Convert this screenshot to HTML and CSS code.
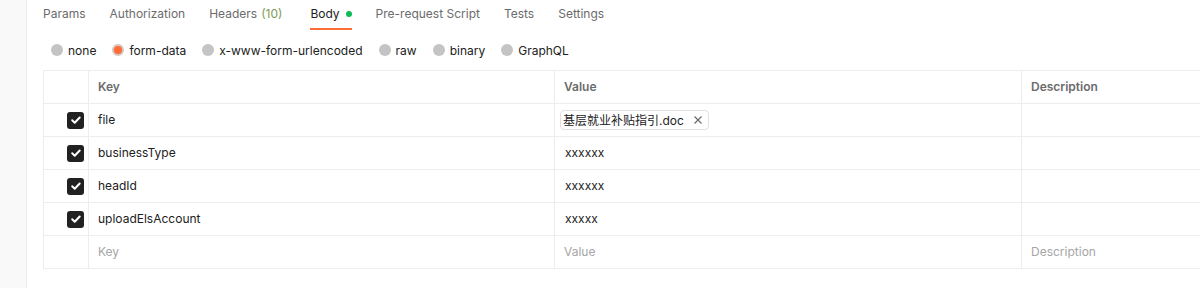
FILE: index.html
```html
<!DOCTYPE html>
<html>
<head>
<meta charset="utf-8">
<link rel="stylesheet" href="styles.css">
</head>
<body>
<div class="side"></div>
<div class="main">
  <div class="tabs">
    <div class="tab">Params</div>
    <div class="tab">Authorization</div>
    <div class="tab">Headers <span class="count">(10)</span></div>
    <div class="tab active">Body <span class="dot"></span></div>
    <div class="tab">Pre-request Script</div>
    <div class="tab">Tests</div>
    <div class="tab">Settings</div>
  </div>
  <div class="radios">
    <label class="radio"><span class="circle"></span>none</label>
    <label class="radio"><span class="circle on"></span>form-data</label>
    <label class="radio"><span class="circle"></span>x-www-form-urlencoded</label>
    <label class="radio"><span class="circle"></span>raw</label>
    <label class="radio"><span class="circle"></span>binary</label>
    <label class="radio"><span class="circle"></span>GraphQL</label>
  </div>
  <div class="table">
    <div class="row head">
      <div class="cell chk"></div>
      <div class="cell">Key</div>
      <div class="cell">Value</div>
      <div class="cell">Description</div>
    </div>
    <div class="row">
      <div class="cell chk"><span class="box"><svg viewBox="0 0 16 16" width="16" height="16"><path d="M4.2 8.3l2.5 2.4 5-5.2" fill="none" stroke="#fff" stroke-width="2" stroke-linecap="round" stroke-linejoin="round"/></svg></span></div>
      <div class="cell">file</div>
      <div class="cell"><span class="chip">基层就业补贴指引.doc<span class="x"><svg viewBox="0 0 10 10" width="10" height="10"><path d="M1.5 1.5l7 7M8.5 1.5l-7 7" stroke="#6b6b6b" stroke-width="1.2"/></svg></span></span></div>
      <div class="cell"></div>
    </div>
    <div class="row">
      <div class="cell chk"><span class="box"><svg viewBox="0 0 16 16" width="16" height="16"><path d="M4.2 8.3l2.5 2.4 5-5.2" fill="none" stroke="#fff" stroke-width="2" stroke-linecap="round" stroke-linejoin="round"/></svg></span></div>
      <div class="cell">businessType</div>
      <div class="cell val">xxxxxx</div>
      <div class="cell"></div>
    </div>
    <div class="row">
      <div class="cell chk"><span class="box"><svg viewBox="0 0 16 16" width="16" height="16"><path d="M4.2 8.3l2.5 2.4 5-5.2" fill="none" stroke="#fff" stroke-width="2" stroke-linecap="round" stroke-linejoin="round"/></svg></span></div>
      <div class="cell">headId</div>
      <div class="cell val">xxxxxx</div>
      <div class="cell"></div>
    </div>
    <div class="row">
      <div class="cell chk"><span class="box"><svg viewBox="0 0 16 16" width="16" height="16"><path d="M4.2 8.3l2.5 2.4 5-5.2" fill="none" stroke="#fff" stroke-width="2" stroke-linecap="round" stroke-linejoin="round"/></svg></span></div>
      <div class="cell">uploadElsAccount</div>
      <div class="cell val">xxxxx</div>
      <div class="cell"></div>
    </div>
    <div class="row last">
      <div class="cell chk"></div>
      <div class="cell ph">Key</div>
      <div class="cell ph">Value</div>
      <div class="cell ph">Description</div>
    </div>
  </div>
</div>
</body>
</html>
```
FILE: styles.css
```css
html, body {
  margin: 0;
  padding: 0;
  background: #fff;
}
body {
  display: flex;
  height: 288px;
  overflow: hidden;
  font-family: Inter, "Noto Sans CJK SC", sans-serif;
  color: #212121;
}
.side {
  width: 26px;
  flex: none;
  background: #f9f9f9;
  border-right: 1px solid #ededed;
}
.main {
  flex: 1;
  padding-left: 16px;
  overflow: hidden;
}
.tabs {
  display: flex;
  gap: 24px;
  height: 30px;
}
.tab {
  font-size: 12px;
  color: #6b6b6b;
  line-height: 28px;
  height: 28px;
  border-bottom: 2px solid transparent;
  white-space: nowrap;
  display: flex;
  align-items: center;
}
.tab .count {
  color: #7d9a55;
  margin-left: 4px;
}
.tab.active {
  color: #212121;
  border-bottom-color: #ff6c37;
  margin-left: 4px;
}
.dot {
  width: 6px;
  height: 6px;
  border-radius: 50%;
  background: #0cbb52;
  margin-left: 6px;
}
.radios {
  display: flex;
  gap: 16px;
  height: 40px;
  align-items: center;
  padding-left: 8px;
}
.radio {
  display: flex;
  align-items: center;
  gap: 5px;
  font-size: 12px;
  color: #212121;
}
.circle {
  width: 12px;
  height: 12px;
  border-radius: 50%;
  background: #c4c4c4;
  box-sizing: border-box;
}
.circle.on {
  background: #ff6c37;
  border: 2px solid #d6c4bd;
}
.table {
  width: 1300px;
  border-bottom: 1px solid #ededed;
}
.row {
  display: grid;
  grid-template-columns: 45px 466px 467px 322px;
}
.cell {
  height: 31px;
  padding-bottom: 1px;
  border-top: 1px solid #ededed;
  border-left: 1px solid #ededed;
  display: flex;
  align-items: center;
  padding-left: 9px;
  font-size: 12px;
  color: #212121;
  white-space: nowrap;
}
.row.head .cell {
  font-weight: 600;
  color: #6b6b6b;
}
.cell.chk {
  justify-content: flex-end;
  padding-left: 0;
  padding-right: 4px;
  padding-bottom: 0;
  height: 32px;
}
.cell.val {
  padding-left: 10px;
}
.box {
  width: 17px;
  height: 17px;
  border-radius: 3px;
  background: #212121;
  display: flex;
  align-items: center;
  justify-content: center;
}
.box svg {
  display: block;
}
.chip {
  display: flex;
  align-items: center;
  height: 18px;
  border: 1px solid #e0e0e0;
  border-radius: 4px;
  padding: 0 5px 0 2px;
  margin-left: -4px;
  font-size: 12px;
  color: #212121;
}
.chip .x {
  margin-left: 9px;
  display: flex;
}
.cell.ph {
  color: #a6a6a6;
}
```
